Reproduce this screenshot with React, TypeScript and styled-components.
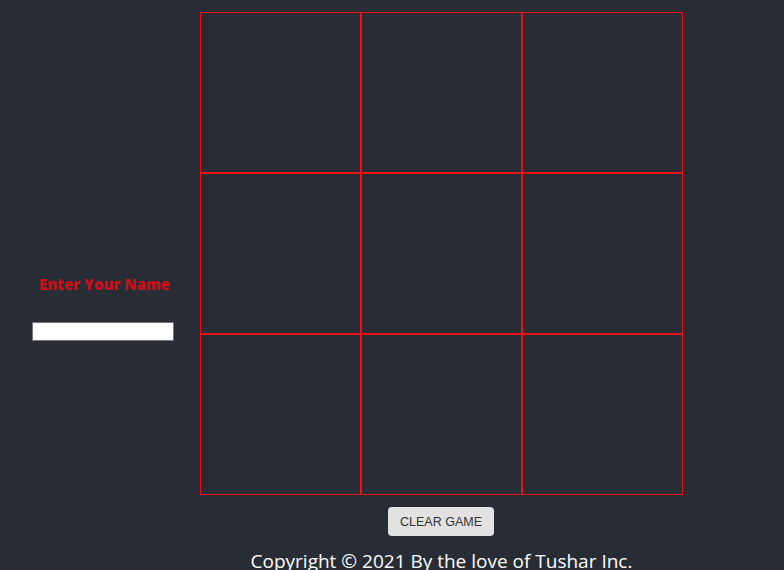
import React, { useState } from 'react'
import styled, { createGlobalStyle } from 'styled-components'

const GlobalStyle = createGlobalStyle`
    html, body {
        margin: 0;
        padding: 0;
        background: #282c34;
        overflow: hidden;
    }
`;

const App = () => {
    const [name, setName] = useState('');
    const [board, setBoard] = useState<string[]>(Array(9).fill(''));

    const play = (i: number) => {
        if (board[i]) return;
        const next = [...board];
        next[i] = board.filter(Boolean).length % 2 === 0 ? 'X' : 'O';
        setBoard(next);
    };

    return (
        <>
            <GlobalStyle />
            <Page>
                <Side>
                    <Label>Enter Your Name</Label>
                    <NameInput value={name} onChange={(e) => setName(e.target.value)} />
                </Side>
                <Main>
                    <Board>
                        {board.map((v, i) => (
                            <Cell key={i} onClick={() => play(i)}>{v}</Cell>
                        ))}
                    </Board>
                    <ClearButton onClick={() => setBoard(Array(9).fill(''))}>Clear Game</ClearButton>
                    <Footer>Copyright © 2021 By the love of Tushar Inc.</Footer>
                </Main>
            </Page>
        </>
    )
};

const Page = styled.div`
    display: flex;
    flex-direction: row;
    align-items: flex-start;
    padding-top: 12px;
    width: 784px;
    height: 570px;
    box-sizing: border-box;
`;

const Side = styled.div`
    width: 208px;
    padding-top: 261px;
    display: flex;
    flex-direction: column;
    align-items: center;
`;

const Label = styled.div`
    font-family: "Open Sans", "Noto Sans", sans-serif;
    font-weight: 800;
    font-size: 14.9px;
    line-height: 22px;
    color: #c8101a;
    margin-bottom: 27px;
    margin-left: 1px;
`;

const NameInput = styled.input`
    width: 142px;
    height: 19px;
    box-sizing: border-box;
    border: 1px solid #767676;
    background: #ffffff;
    padding: 1px 2px;
    margin-right: 2px;
    outline: none;
`;

const Main = styled.div`
    width: 483px;
    margin-left: -8px;
    display: flex;
    flex-direction: column;
    align-items: center;
`;

const Board = styled.div`
    display: grid;
    grid-template-columns: repeat(3, 161px);
    grid-template-rows: repeat(3, 161px);
`;

const Cell = styled.div`
    box-sizing: border-box;
    border: 1px solid #e41414;
    display: flex;
    align-items: center;
    justify-content: center;
    font-family: "Open Sans", sans-serif;
    font-size: 64px;
    color: #ffffff;
    cursor: pointer;
`;

const ClearButton = styled.button`
    margin-top: 12px;
    width: 106px;
    height: 29px;
    margin-left: -1px;
    border: none;
    border-radius: 4px;
    background: #e2e2e2;
    color: #333333;
    font-family: "Liberation Sans", Arial, sans-serif;
    font-size: 12.5px;
    text-transform: uppercase;
    cursor: pointer;
`;

const Footer = styled.div`
    margin-top: 12px;
    font-family: "Open Sans", "Noto Sans", sans-serif;
    font-size: 19px;
    line-height: 26px;
    color: #ffffff;
    white-space: nowrap;
`;

export default App;
